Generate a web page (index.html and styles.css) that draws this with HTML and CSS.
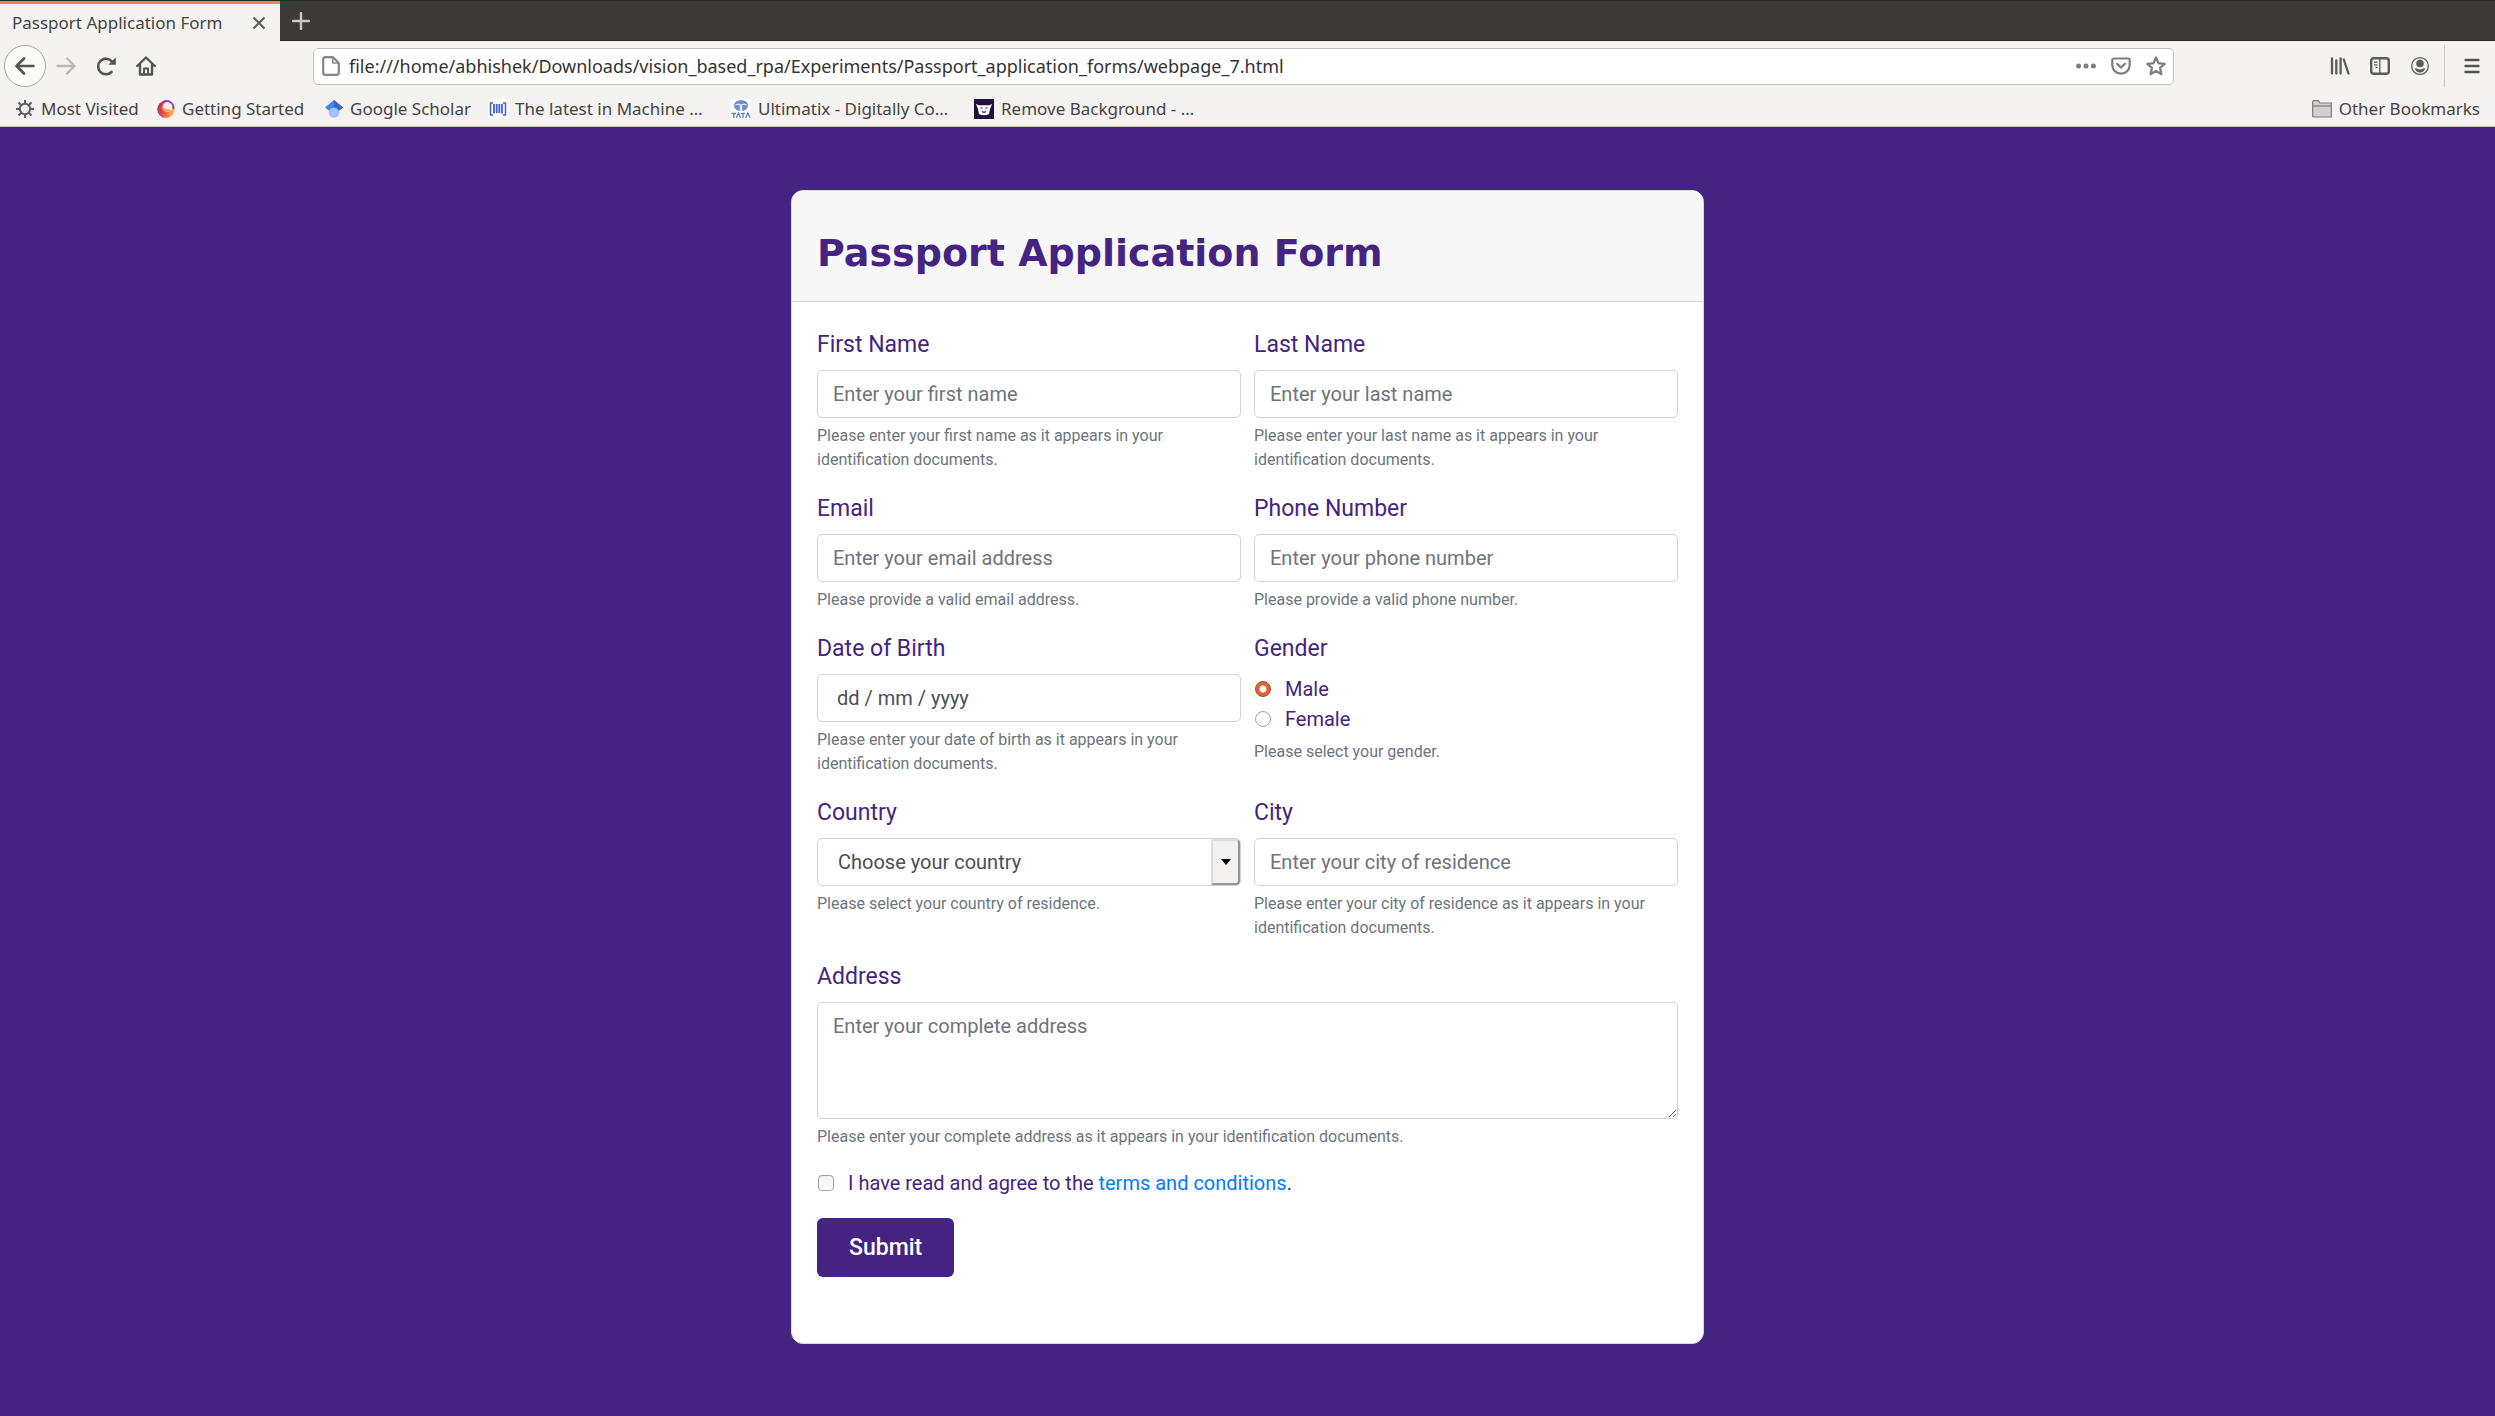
FILE: index.html
```html
<!DOCTYPE html>
<html lang="en">
<head>
<meta charset="utf-8">
<title>Passport Application Form</title>
<link rel="stylesheet" href="styles.css">
</head>
<body>
<header class="browser">
  <div class="tabs">
    <div class="tab">
      <span class="tab-title">Passport Application Form</span>
      <button class="icon-button" type="button" aria-label="Close tab"><svg width="14" height="14" viewBox="0 0 14 14" fill="none" stroke="#5c5b58" stroke-width="2"><path d="M1.500 1.500l11 11M12.500 1.500l-11 11"/></svg></button>
    </div>
    <button class="icon-button new-tab" type="button" aria-label="New tab"><svg width="18" height="18" viewBox="0 0 18 18" fill="none" stroke="#c9c6c1" stroke-width="2.400" stroke-linecap="round"><path d="M9 1v16M1 9h16"/></svg></button>
  </div>
  <nav class="toolbar" aria-label="Navigation">
    <button class="icon-button back" type="button" aria-label="Back"><svg width="20" height="20" viewBox="0 0 20 20" fill="none" stroke="#555451" stroke-width="2.600" stroke-linecap="round" stroke-linejoin="round"><path d="M18.500 10H2M9 2.500L1.500 10L9 17.500"/></svg></button>
    <button class="icon-button" type="button" aria-label="Forward" disabled><svg width="20" height="20" viewBox="0 0 20 20" fill="none" stroke="#b9b8b5" stroke-width="2.400" stroke-linecap="round" stroke-linejoin="round"><path d="M1.500 10H18M11 2.500L18.500 10L11 17.500"/></svg></button>
    <button class="icon-button" type="button" aria-label="Reload"><svg width="20" height="20" viewBox="0 0 20 20" fill="none" stroke="#555451" stroke-width="2.600" stroke-linecap="round"><path d="M15.500 16A7.800 7.800 0 1 1 16 5.500"/><path d="M19.800 1.200v7.500h-7.500z" fill="#555451" stroke="none"/></svg></button>
    <button class="icon-button" type="button" aria-label="Home"><svg width="20" height="20" viewBox="0 0 20 20" fill="none" stroke="#555451" stroke-width="2.400" stroke-linecap="round" stroke-linejoin="round"><path d="M1.200 10L10 1.500L18.800 10M4 9v9.500h12V9"/><path d="M8 18v-5.500h4V18" stroke-width="2"/></svg></button>
    <div class="address">
      <svg width="18" height="20" viewBox="0 0 18 20" fill="none" stroke="#868583" stroke-width="2.200" stroke-linejoin="round"><path d="M3.500 1.200H11L16.800 7v9.500a2.300 2.300 0 0 1-2.300 2.300h-11A2.300 2.300 0 0 1 1.200 16.500v-13A2.300 2.300 0 0 1 3.500 1.200z"/><path d="M10.800 1.500V7h5.700" stroke-width="1.500"/></svg>
      <input class="address-text" type="text" aria-label="Address bar" value="file:///home/abhishek/Downloads/vision_based_rpa/Experiments/Passport_application_forms/webpage_7.html">
      <span class="address-actions">
        <button class="icon-button" type="button" aria-label="Page actions"><svg width="20" height="20" viewBox="0 0 20 20" fill="#7f7e7c"><circle cx="2.600" cy="10" r="2.500"/><circle cx="10" cy="10" r="2.500"/><circle cx="17.400" cy="10" r="2.500"/></svg></button>
        <button class="icon-button" type="button" aria-label="Save to Pocket"><svg width="20" height="20" viewBox="0 0 20 20" fill="none" stroke="#7f7e7c" stroke-width="2.200" stroke-linecap="round" stroke-linejoin="round"><path d="M2.800 2.500h14.400a1.500 1.500 0 0 1 1.500 1.500v5a8.700 8.700 0 0 1-17.400 0V4a1.500 1.500 0 0 1 1.500-1.500z"/><path d="M6 7.800l4 3.800l4-3.800"/></svg></button>
        <button class="icon-button" type="button" aria-label="Bookmark this page"><svg width="20" height="20" viewBox="0 0 20 20" fill="none" stroke="#7f7e7c" stroke-width="2.200" stroke-linejoin="round"><path d="M10 1.500l2.500 5.700l6.200.6l-4.700 4.100l1.400 6.300L10 14.900l-5.400 3.300L6 11.900L1.300 7.800l6.200-.6z"/></svg></button>
      </span>
    </div>
    <div class="tools">
      <button class="icon-button" type="button" aria-label="Library"><svg width="20" height="20" viewBox="0 0 20 20" fill="none" stroke="#5c5b58" stroke-width="2.300" stroke-linecap="round"><path d="M2 2.500v15M6.300 4.500v13M10.600 2.500v15M13.800 3.500L18.500 17.500"/></svg></button>
      <button class="icon-button" type="button" aria-label="Sidebars"><svg width="20" height="20" viewBox="0 0 20 20" fill="none" stroke="#5c5b58"><rect x="1.200" y="2.200" width="17.600" height="15.600" rx="2.500" stroke-width="2.400"/><path d="M9.800 2v16M4 6.200h3.500M4 8.800h3.500M5.500 11.400h2" stroke-width="1.300"/></svg></button>
      <button class="icon-button" type="button" aria-label="Account"><svg width="20" height="20" viewBox="0 0 20 20"><circle cx="10" cy="10" r="8.400" fill="none" stroke="#5c5b58" stroke-width="1.300"/><circle cx="10" cy="7.500" r="3.800" fill="#5c5b58"/><path d="M4.800 12.500h2.400q2.800 2 5.600 0h2.400q-1.400 4-5.200 4t-5.200-4z" fill="#5c5b58"/></svg></button>
      <span class="divider"></span>
      <button class="icon-button" type="button" aria-label="Menu"><svg width="16" height="16" viewBox="0 0 16 16" fill="none" stroke="#555451" stroke-width="2.400" stroke-linecap="round"><path d="M1.500 2h13M1.500 8h13M1.500 14h13"/></svg></button>
    </div>
  </nav>
  <nav class="bookmarks" aria-label="Bookmarks">
    <a class="bookmark" href="#"><svg width="18" height="18" viewBox="0 0 18 18" fill="none" stroke="#5f5e5b"><circle cx="9" cy="9" r="5.200" stroke-width="2"/><path d="M9 3.500V0M9 18v-3.500M3.500 9H0M18 9h-3.500M5 5L2.500 2.500M15.500 15.500L13 13M13 5l2.500-2.500M2.500 15.500L5 13" stroke-width="2"/></svg><span>Most Visited</span></a>
    <a class="bookmark" href="#"><svg width="18" height="18" viewBox="0 0 18 18"><defs><linearGradient id="fox" x1="0" y1=".3" x2="1" y2=".7"><stop offset="0" stop-color="#c42060"/><stop offset=".5" stop-color="#e9584c"/><stop offset="1" stop-color="#ffc64a"/></linearGradient></defs><circle cx="9" cy="9.300" r="8.700" fill="url(#fox)"/><circle cx="10.500" cy="7" r="5" fill="#f8eef2"/><path d="M6 2a7 7 0 0 1 10.500 7" fill="none" stroke="#8a35e6" stroke-width="1.600"/><path d="M5 7q3 5 8 3" fill="none" stroke="#f4a04b" stroke-width="2"/></svg><span>Getting Started</span></a>
    <a class="bookmark" href="#"><svg width="18" height="18" viewBox="0 0 18 18"><circle cx="9" cy="12.500" r="5.300" fill="#a0c3ff"/><path d="M9 0L0 7.500l4.200 3.200a5.300 5.300 0 0 1 9.600 0L18 7.500z" fill="#4285f4"/><path d="M9 0l9 7.500l-4.200 3.200A5.300 5.300 0 0 0 9 7.300z" fill="#356ac3"/></svg><span>Google Scholar</span></a>
    <a class="bookmark" href="#"><svg width="20" height="20" viewBox="0 0 20 20" fill="none" stroke="#3f5fd0"><path d="M0 0h20v20H0z" fill="#fff" stroke="none"/><path d="M5 4H2.500v12H5M15 4h2.500v12H15" stroke-width="1.500"/><path d="M6 5v9.500M8.700 5v9M11.300 5v9M14 5v9.500" stroke-width="1.800"/></svg><span>The latest in Machine …</span></a>
    <a class="bookmark" href="#"><svg width="20" height="20" viewBox="0 0 20 20"><path d="M0 0h20v20H0z" fill="#fff"/><ellipse cx="10" cy="6.500" rx="7" ry="5.500" fill="#6f8ec6"/><path d="M9.300 12V5.500Q7 4.500 4.500 6M10.700 12V5.500Q13 4.500 15.500 6" stroke="#fff" fill="none"/><path d="M.5 14.500h4.600M2.800 14.500V19M5.300 19l2.200-5l2.200 5M9.700 14.500h4.600M12 14.500V19M14.600 19l2.200-5l2.200 5" fill="none" stroke="#6482bd" stroke-width="1.400"/></svg><span>Ultimatix - Digitally Co…</span></a>
    <a class="bookmark" href="#"><svg width="20" height="20" viewBox="0 0 20 20"><path d="M0 0h20v20H0z" fill="#23103a"/><path d="M2 5l3 1.200h10L18 5l-2 5l-1 5q-5 2.500-10 0L4 10z" fill="#fff"/><path d="M6.500 9h2M11.500 9h2M8 12.500q2 1.500 4 0" stroke="#23103a" stroke-width="1.200" fill="none"/></svg><span>Remove Background - …</span></a>
    <a class="bookmark" href="#"><svg width="20" height="18" viewBox="0 0 20 18" fill="#d2d1cf" stroke="#7c7b79" stroke-width="1.200"><path d="M.7 16.500V1.500L1.500.7h4.800L8 3h11.300v14H1.500z"/><path d="M.7 6h18.600" /></svg><span>Other Bookmarks</span></a>
  </nav>
</header>
<main class="page">
  <form class="card">
    <div class="card-header"><h1 class="title">Passport Application Form</h1></div>
    <div class="card-body">
      <div class="row">
        <div class="field">
          <label class="label" for="first">First Name</label>
          <input class="control" id="first" type="text" placeholder="Enter your first name">
          <small class="help">Please enter your first name as it appears in your identification documents.</small>
        </div>
        <div class="field">
          <label class="label" for="last">Last Name</label>
          <input class="control" id="last" type="text" placeholder="Enter your last name">
          <small class="help">Please enter your last name as it appears in your identification documents.</small>
        </div>
      </div>
      <div class="row">
        <div class="field">
          <label class="label" for="email">Email</label>
          <input class="control" id="email" type="email" placeholder="Enter your email address">
          <small class="help">Please provide a valid email address.</small>
        </div>
        <div class="field">
          <label class="label" for="phone">Phone Number</label>
          <input class="control" id="phone" type="tel" placeholder="Enter your phone number">
          <small class="help">Please provide a valid phone number.</small>
        </div>
      </div>
      <div class="row">
        <div class="field">
          <label class="label" for="dob">Date of Birth</label>
          <input class="control date" id="dob" type="text" placeholder="dd / mm / yyyy">
          <small class="help">Please enter your date of birth as it appears in your identification documents.</small>
        </div>
        <div class="field" role="radiogroup" aria-labelledby="gender">
          <span class="label" id="gender">Gender</span>
          <label class="choice"><input class="radio" type="radio" name="gender" checked>Male</label>
          <label class="choice"><input class="radio" type="radio" name="gender">Female</label>
          <small class="help">Please select your gender.</small>
        </div>
      </div>
      <div class="row">
        <div class="field">
          <label class="label" for="country">Country</label>
          <div class="select-box">
            <select class="control select" id="country"><option>Choose your country</option></select>
            <span class="select-arrow"><svg width="10" height="6" viewBox="0 0 10 6"><path d="M0 0h10L5 6z" fill="#000"/></svg></span>
          </div>
          <small class="help">Please select your country of residence.</small>
        </div>
        <div class="field">
          <label class="label" for="city">City</label>
          <input class="control" id="city" type="text" placeholder="Enter your city of residence">
          <small class="help">Please enter your city of residence as it appears in your identification documents.</small>
        </div>
      </div>
      <div class="field">
        <label class="label" for="address">Address</label>
        <textarea class="control area" id="address" placeholder="Enter your complete address"></textarea>
        <small class="help">Please enter your complete address as it appears in your identification documents.</small>
      </div>
      <div class="choice">
        <input class="checkbox" id="agree" type="checkbox">
        <label for="agree">I have read and agree to the <a class="link" href="#">terms and conditions</a>.</label>
      </div>
      <button class="submit" type="submit">Submit</button>
    </div>
  </form>
</main>
</body>
</html>
```
FILE: styles.css
```css
* { box-sizing: border-box; }

body {
  margin: 0;
  min-height: 100vh;
  background: #452481;
  color: #452481;
  font: 20px/30px Roboto, sans-serif;
}

button, input, select, textarea { font: inherit; }
svg { display: block; flex: none; }

/* Browser chrome */
.browser {
  background: #f4f3f1;
  border-bottom: 1px solid #c4c2bf;
  color: #454441;
  font: 17px/24px "Noto Sans", sans-serif;
}

.icon-button {
  display: flex;
  align-items: center;
  justify-content: center;
  padding: 0;
  border: 0;
  background: none;
}

.tabs {
  display: flex;
  height: 41px;
  background: #3c3a36;
  border-top: 1px solid #2a2826;
  border-bottom: 1px solid #2a2826;
}

.tab {
  display: flex;
  align-items: center;
  justify-content: space-between;
  width: 280px;
  height: 40px;
  padding: 0 14px 0 12px;
  border-top: 3px solid #f37f54;
  background: #f4f3f1;
}

.new-tab { margin-left: 12px; }

.toolbar {
  display: flex;
  align-items: center;
  gap: 20px;
  height: 50px;
  padding: 0 15px 0 4px;
}

.back {
  width: 42px;
  height: 42px;
  margin-right: -10px;
  border: 1px solid #a9a8a5;
  border-radius: 50%;
  background: #fafaf9;
}

.address {
  display: flex;
  flex: 1;
  align-items: center;
  gap: 9px;
  height: 37px;
  margin: 0 136px 0 137px;
  padding: 0 7px 0 8px;
  border: 1px solid #c3c1bd;
  border-radius: 5px;
  background: #fff;
}

.address-text {
  flex: 1;
  min-width: 0;
  padding: 0;
  border: 0;
  outline: 0;
  background: none;
  color: #333;
  font-size: 18px;
}

.address-actions { display: flex; gap: 15px; }
.tools { display: flex; align-items: center; gap: 20px; }
.divider { width: 1px; height: 42px; margin: 0 -1px 0 -6px; background: #c9c8c5; }

.bookmarks {
  display: grid;
  grid-template-columns: 141px 168px 163px 243px 243px 1fr auto;
  align-items: center;
  height: 35px;
  padding: 0 15px 0 16px;
}

.bookmark {
  display: flex;
  align-items: center;
  gap: 7px;
  color: inherit;
  text-decoration: none;
  white-space: nowrap;
}

/* Form */
.page { padding: 63px 24px; }

.card {
  max-width: 913px;
  margin: 0 auto;
  overflow: hidden;
  border: 1px solid #dadada;
  border-radius: 12px;
  background: #fff;
}

.card-header {
  padding: 40px 25px 25px;
  border-bottom: 1px solid #d8d8d8;
  background: #f7f7f7;
}

.title {
  margin: 0;
  font: bold 38px/45px "DejaVu Sans", sans-serif;
}

.card-body { padding: 25px 25px 66px; }

.row {
  display: grid;
  grid-template-columns: 1fr 1fr;
  gap: 13px;
}

.field { margin-bottom: 19px; }

.label {
  display: block;
  margin-bottom: 7px;
  font-size: 23px;
  line-height: 36px;
}

.control {
  display: block;
  width: 100%;
  height: 48px;
  padding: 8px 15px;
  border: 1px solid #ced4da;
  border-radius: 5px;
  background: #fff;
  color: #495057;
}

.control::placeholder { color: #6c757d; opacity: 1; }
.date { padding-left: 19px; }
.date::placeholder { color: #495057; }

.select-box { position: relative; }
.select { padding-left: 20px; appearance: none; }

.select-arrow {
  position: absolute;
  top: 1px;
  right: 1px;
  bottom: 1px;
  display: flex;
  align-items: center;
  justify-content: center;
  width: 29px;
  border: 2px solid #dddddc;
  border-right-color: #929495;
  border-bottom-color: #929495;
  border-radius: 0 4px 4px 0;
  background: #f2f1f0;
  pointer-events: none;
}

.area { height: 117px; resize: vertical; }

.help {
  display: block;
  margin-top: 6px;
  color: #6c757d;
  font-size: 16px;
  line-height: 24px;
}

.choice { display: flex; align-items: center; }

.radio, .checkbox {
  flex: none;
  width: 16px;
  height: 16px;
  margin: 0 14px 0 1px;
  appearance: none;
  border: 1px solid #a3a3a3;
  background: #fff;
}

.radio { border-radius: 50%; }

.radio:checked {
  border-color: #a34a25;
  background: radial-gradient(circle, #fff 3px, #df6234 4px);
}

.checkbox { border-radius: 4px; background: linear-gradient(#f2f2f2, #fff); }

.link { color: #007bff; text-decoration: none; }

.submit {
  display: block;
  height: 59px;
  margin-top: 20px;
  padding: 0 32px;
  border: 0;
  border-radius: 6px;
  background: #452481;
  color: #fff;
  font-size: 23px;
  font-weight: 500;
}
```
